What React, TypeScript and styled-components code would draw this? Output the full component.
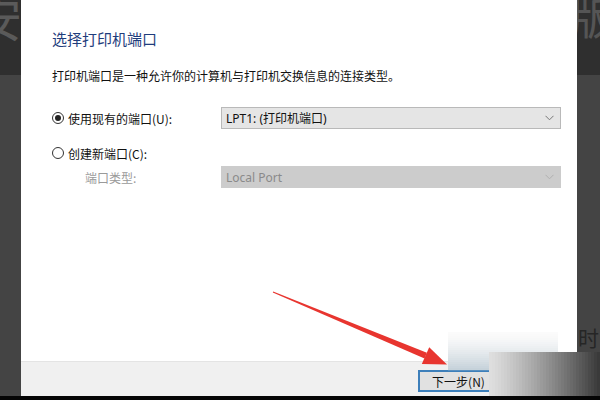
import React, { useState } from 'react'
import styled, { createGlobalStyle } from 'styled-components'

const GlobalStyle = createGlobalStyle`
  html, body {
    margin: 0;
    padding: 0;
    background: #000;
  }
  body {
    font-family: 'Noto Sans', 'Noto Sans CJK SC', sans-serif;
  }
`

const Screen = styled.div`
  position: relative;
  width: 600px;
  height: 400px;
  overflow: hidden;
  display: grid;
  grid-template-columns: 21px 556px 23px;
  grid-template-rows: 396px 4px;
  background: #444444;
`

const Strip = styled.div`
  position: relative;
  overflow: hidden;
  background: #444444;
  box-shadow: inset 0 75px 0 #2f2f2f;
`

const BgGlyph = styled.span<{ $left: number; $top: number; $size: number; $color: string }>`
  position: absolute;
  left: ${({ $left }) => $left}px;
  top: ${({ $top }) => $top}px;
  font-family: 'Noto Sans CJK SC', sans-serif;
  font-size: ${({ $size }) => $size}px;
  line-height: 1;
  color: ${({ $color }) => $color};
`

const BottomBar = styled.div`
  grid-column: 1 / span 3;
  background: #050505;
`

const Dialog = styled.div`
  background: #ffffff;
  display: flex;
  flex-direction: column;
`

const Body = styled.div`
  flex: 1;
  padding: 29px 16px 0 31px;
  display: flex;
  flex-direction: column;
`

const Title = styled.div`
  font-family: 'Noto Sans CJK SC', sans-serif;
  font-size: 15px;
  line-height: 20px;
  color: #1f3d7c;
`

const Description = styled.div`
  margin-top: 19px;
  font-family: 'Noto Sans CJK SC', sans-serif;
  font-size: 12px;
  line-height: 16px;
  color: #111;
`

const Form = styled.div`
  margin-top: 23px;
  display: grid;
  grid-template-columns: 169px 340px;
  grid-auto-rows: auto;
  align-items: center;
`

const RadioLabel = styled.label`
  display: flex;
  align-items: center;
  gap: 4px;
  height: 22px;
  font-family: 'Noto Sans CJK SC', sans-serif;
  font-size: 12px;
  color: #111;
  cursor: default;
`

const RadioCircle = styled.span<{ $checked: boolean }>`
  box-sizing: border-box;
  width: 12px;
  height: 12px;
  border: 1px solid #333;
  border-radius: 50%;
  display: flex;
  align-items: center;
  justify-content: center;
  &::after {
    content: '';
    width: 6px;
    height: 6px;
    border-radius: 50%;
    background: #222;
    display: ${({ $checked }) => ($checked ? 'block' : 'none')};
  }
`

const SubLabel = styled.div`
  padding-left: 33px;
  font-family: 'Noto Sans CJK SC', sans-serif;
  font-size: 12px;
  color: #9a9a9a;
`

const Spacer = styled.div<{ $h: number }>`
  grid-column: 1 / span 2;
  height: ${({ $h }) => $h}px;
`

const Select = styled.div<{ $disabled?: boolean }>`
  box-sizing: border-box;
  height: 22px;
  display: flex;
  align-items: center;
  justify-content: space-between;
  padding: 0 6px 0 4px;
  background: ${({ $disabled }) => ($disabled ? '#cccccc' : '#e5e5e5')};
  border: 1px solid ${({ $disabled }) => ($disabled ? '#cccccc' : '#b9b9b9')};
  font-family: 'Noto Sans', 'Noto Sans CJK SC', sans-serif;
  font-size: 12px;
  color: ${({ $disabled }) => ($disabled ? '#8a8a8a' : '#111')};
  svg {
    stroke: ${({ $disabled }) => ($disabled ? '#b0b0b0' : '#777')};
  }
`

const Footer = styled.div`
  height: 35px;
  box-sizing: border-box;
  background: #f0f0f0;
  border-top: 1px solid #e4e4e4;
  display: flex;
  justify-content: flex-end;
  padding: 8px 82px 0 0;
`

const Button = styled.button`
  box-sizing: border-box;
  width: 77px;
  height: 22px;
  padding: 0 0 0 4px;
  background: #e1e1e1;
  border: 2px solid #3d7fba;
  font-family: 'Noto Sans CJK SC', sans-serif;
  font-size: 12px;
  color: #111;
`

// the blurred patches and the red arrow painted over the screenshot
const Overlay = styled.svg`
  position: absolute;
  left: 0;
  top: 0;
  pointer-events: none;
`

const lerp = (a: number, b: number, t: number) => Math.round(a + (b - a) * t)
const hex = (r: number, g: number, b: number) =>
  '#' + [r, g, b].map((v) => v.toString(16).padStart(2, '0')).join('')

// stepped fades, drawn as thin bands
const glowBands = Array.from({ length: 19 }, (_, i) => {
  const t = Math.pow(i / 18, 1.4)
  return hex(lerp(251, 198, t), lerp(251, 210, t), lerp(251, 218, t))
})
const shadeBands = Array.from({ length: 37 }, (_, i) => {
  const v = lerp(222, 58, Math.pow(i / 36, 1.2))
  return hex(v, v, v)
})

const Chevron = () => (
  <svg width="9" height="6" viewBox="0 0 9 6" fill="none" strokeWidth="1">
    <path d="M0.5 0.8 L4.5 4.8 L8.5 0.8" />
  </svg>
)

const App: React.FC = () => {
  const [mode, setMode] = useState<'existing' | 'new'>('existing')

  return (
    <>
      <GlobalStyle />
      <Screen>
        <Strip>
          <BgGlyph $left={-26} $top={-8} $size={48} $color="#5a5a5a">
            安
          </BgGlyph>
        </Strip>
        <Dialog>
          <Body>
            <Title>选择打印机端口</Title>
            <Description>打印机端口是一种允许你的计算机与打印机交换信息的连接类型。</Description>
            <Form>
              <RadioLabel onClick={() => setMode('existing')}>
                <RadioCircle $checked={mode === 'existing'} />
                使用现有的端口(U):
              </RadioLabel>
              <Select>
                <span>LPT1: (打印机端口)</span>
                <Chevron />
              </Select>
              <Spacer $h={13} />
              <RadioLabel onClick={() => setMode('new')}>
                <RadioCircle $checked={mode === 'new'} />
                创建新端口(C):
              </RadioLabel>
              <div />
              <Spacer $h={2} />
              <SubLabel>端口类型:</SubLabel>
              <Select $disabled>
                <span>Local Port</span>
                <Chevron />
              </Select>
            </Form>
          </Body>
          <Footer>
            <Button>下一步(N)</Button>
          </Footer>
        </Dialog>
        <Strip>
          <BgGlyph $left={-6} $top={-6} $size={44} $color="#555555">
            版
          </BgGlyph>
          <BgGlyph $left={1} $top={327} $size={21} $color="#262626">
            时
          </BgGlyph>
        </Strip>
        <BottomBar />

        <Overlay width="600" height="400" viewBox="0 0 600 400">
          {glowBands.map((c, i) => (
            <rect key={`g${i}`} x="448" y={332 + i * 2} width="110" height="2.2" fill={c} />
          ))}
          {shadeBands.map((c, i) => (
            <rect key={`s${i}`} x={489 + i * 3} y="352" width="3.2" height="44" fill={c} />
          ))}
          <polygon
            points="272.8,292.5 273.2,291.5 426.9,352.8 424.5,358.4"
            fill="#e8352f"
          />
          <polygon points="447,364.5 421.8,364 429.2,347.2" fill="#e8352f" />
        </Overlay>
      </Screen>
    </>
  )
}

export default App
